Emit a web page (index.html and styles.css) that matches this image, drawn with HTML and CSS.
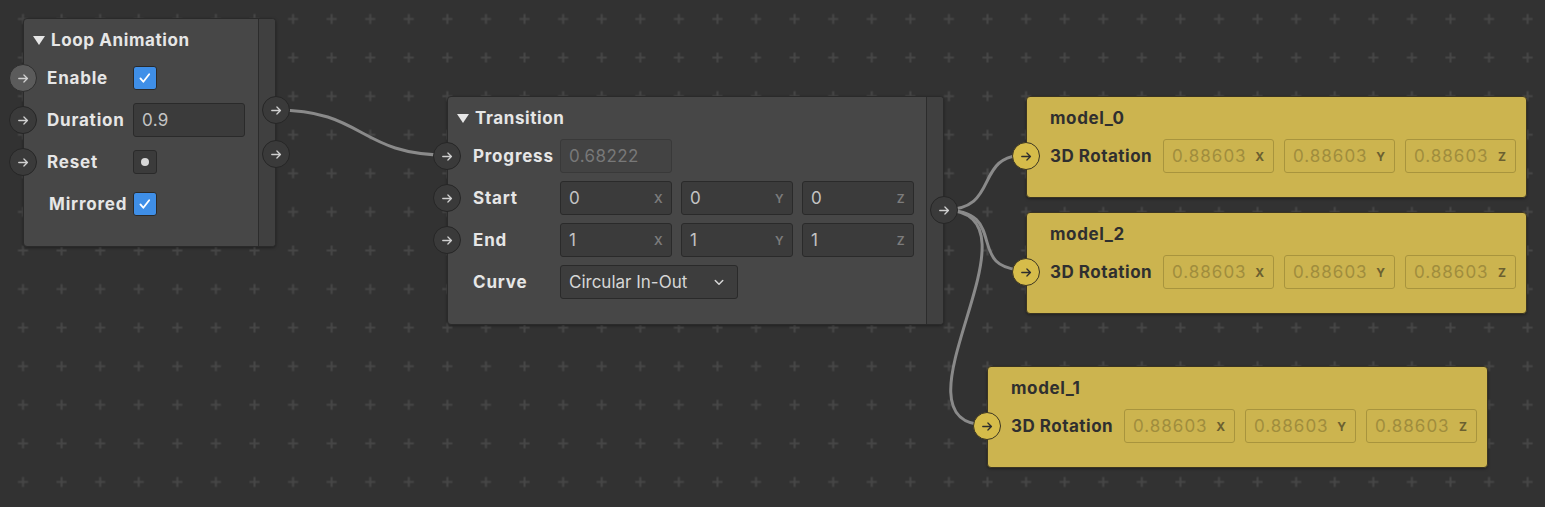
FILE: index.html
```html
<!DOCTYPE html>
<html lang="en">
<head>
    <meta charset="UTF-8">
    <meta name="viewport" content="width=device-width, initial-scale=1.0">
    <title>Node Graph</title>
    <link rel="stylesheet" href="styles.css">
</head>
<body>
    <div class="canvas">
        <svg class="grid" xmlns="http://www.w3.org/2000/svg">
            <defs>
                <pattern id="plus" x="3.71" y="-0.29" width="38.58" height="38.58" patternUnits="userSpaceOnUse">
                    <path d="M14.3 19.3h10M19.3 14.3v10" stroke="#464646" stroke-width="2"/>
                </pattern>
            </defs>
            <rect width="100%" height="100%" fill="url(#plus)"/>
        </svg>

        <svg class="edges" viewBox="0 0 1545 507" xmlns="http://www.w3.org/2000/svg">
            <g fill="none" stroke="#8a8a8a" stroke-width="3" stroke-linecap="round">
                <path d="M276 110 C 365 110, 358 155, 447 155"/>
                <path d="M943 210 C 1002 210, 972 155, 1026 155"/>
                <path d="M943 210 C 1012 210, 962 270, 1026 270"/>
                <path d="M943 210 C 1055 210, 880 425, 987 425"/>
            </g>
        </svg>

        <!-- Loop Animation -->
        <div class="node node-loop">
            <div class="node-body">
                <div class="node-title"><span class="caret"></span>Loop Animation</div>
                <div class="row">
                    <span class="port port-hover"><svg viewBox="0 0 24 24"><path d="M6 12h11M12.5 7.5 17 12l-4.5 4.5"/></svg></span>
                    <span class="label">Enable</span>
                    <span class="check"><svg viewBox="0 0 24 24"><path d="M6.5 12.5l3.5 4 7-9"/></svg></span>
                </div>
                <div class="row">
                    <span class="port"><svg viewBox="0 0 24 24"><path d="M6 12h11M12.5 7.5 17 12l-4.5 4.5"/></svg></span>
                    <span class="label">Duration</span>
                    <span class="field"><span class="value">0.9</span></span>
                </div>
                <div class="row">
                    <span class="port"><svg viewBox="0 0 24 24"><path d="M6 12h11M12.5 7.5 17 12l-4.5 4.5"/></svg></span>
                    <span class="label">Reset</span>
                    <span class="trigger"><span class="dot"></span></span>
                </div>
                <div class="row">
                    <span class="label label-plain">Mirrored</span>
                    <span class="check"><svg viewBox="0 0 24 24"><path d="M6.5 12.5l3.5 4 7-9"/></svg></span>
                </div>
            </div>
            <div class="node-outs">
                <span class="port port-out out-a"><svg viewBox="0 0 24 24"><path d="M6 12h11M12.5 7.5 17 12l-4.5 4.5"/></svg></span>
                <span class="port port-out out-b"><svg viewBox="0 0 24 24"><path d="M6 12h11M12.5 7.5 17 12l-4.5 4.5"/></svg></span>
            </div>
        </div>

        <!-- Transition -->
        <div class="node node-transition">
            <div class="node-body">
                <div class="node-title"><span class="caret"></span>Transition</div>
                <div class="row">
                    <span class="port"><svg viewBox="0 0 24 24"><path d="M6 12h11M12.5 7.5 17 12l-4.5 4.5"/></svg></span>
                    <span class="label">Progress</span>
                    <span class="field field-disabled"><span class="value">0.68222</span></span>
                </div>
                <div class="row">
                    <span class="port"><svg viewBox="0 0 24 24"><path d="M6 12h11M12.5 7.5 17 12l-4.5 4.5"/></svg></span>
                    <span class="label">Start</span>
                    <div class="vec">
                        <span class="field"><span class="value">0</span><span class="axis">X</span></span>
                        <span class="field"><span class="value">0</span><span class="axis">Y</span></span>
                        <span class="field"><span class="value">0</span><span class="axis">Z</span></span>
                    </div>
                </div>
                <div class="row">
                    <span class="port"><svg viewBox="0 0 24 24"><path d="M6 12h11M12.5 7.5 17 12l-4.5 4.5"/></svg></span>
                    <span class="label">End</span>
                    <div class="vec">
                        <span class="field"><span class="value">1</span><span class="axis">X</span></span>
                        <span class="field"><span class="value">1</span><span class="axis">Y</span></span>
                        <span class="field"><span class="value">1</span><span class="axis">Z</span></span>
                    </div>
                </div>
                <div class="row">
                    <span class="label label-plain">Curve</span>
                    <span class="select">Circular In-Out<svg viewBox="0 0 24 24"><path d="M7 10l5 5 5-5"/></svg></span>
                </div>
            </div>
            <div class="node-outs">
                <span class="port port-out out-c"><svg viewBox="0 0 24 24"><path d="M6 12h11M12.5 7.5 17 12l-4.5 4.5"/></svg></span>
            </div>
        </div>

        <!-- Models -->
        <div class="node model model-0">
            <div class="node-title">model_0</div>
            <div class="row">
                <span class="port port-yellow"><svg viewBox="0 0 24 24"><path d="M6 12h11M12.5 7.5 17 12l-4.5 4.5"/></svg></span>
                <span class="label">3D Rotation</span>
                <div class="vec">
                    <span class="field"><span class="value">0.88603</span><span class="axis">X</span></span>
                    <span class="field"><span class="value">0.88603</span><span class="axis">Y</span></span>
                    <span class="field"><span class="value">0.88603</span><span class="axis">Z</span></span>
                </div>
            </div>
        </div>

        <div class="node model model-2">
            <div class="node-title">model_2</div>
            <div class="row">
                <span class="port port-yellow"><svg viewBox="0 0 24 24"><path d="M6 12h11M12.5 7.5 17 12l-4.5 4.5"/></svg></span>
                <span class="label">3D Rotation</span>
                <div class="vec">
                    <span class="field"><span class="value">0.88603</span><span class="axis">X</span></span>
                    <span class="field"><span class="value">0.88603</span><span class="axis">Y</span></span>
                    <span class="field"><span class="value">0.88603</span><span class="axis">Z</span></span>
                </div>
            </div>
        </div>

        <div class="node model model-1">
            <div class="node-title">model_1</div>
            <div class="row">
                <span class="port port-yellow"><svg viewBox="0 0 24 24"><path d="M6 12h11M12.5 7.5 17 12l-4.5 4.5"/></svg></span>
                <span class="label">3D Rotation</span>
                <div class="vec">
                    <span class="field"><span class="value">0.88603</span><span class="axis">X</span></span>
                    <span class="field"><span class="value">0.88603</span><span class="axis">Y</span></span>
                    <span class="field"><span class="value">0.88603</span><span class="axis">Z</span></span>
                </div>
            </div>
        </div>
    </div>
</body>
</html>
```

FILE: styles.css
```css
html, body {
    margin: 0;
    padding: 0;
    width: 100%;
    height: 100%;
    overflow: hidden;
    background-color: #323232;
    font-family: Inter, "Noto Sans", sans-serif;
}
.canvas {
    position: relative;
    width: 1545px;
    height: 507px;
}
.grid, .edges {
    position: absolute;
    top: 0;
    left: 0;
    width: 100%;
    height: 100%;
}

/* nodes */
.node {
    position: absolute;
    display: flex;
    box-sizing: border-box;
    border: 1px solid #2a2a2a;
    border-radius: 4px;
    background-color: #474747;
    box-shadow: 0 1px 3px rgba(0,0,0,0.35);
}
.node-loop {
    left: 23px;
    top: 18px;
    width: 253px;
    height: 229px;
}
.node-transition {
    left: 447px;
    top: 96px;
    width: 497px;
    height: 229px;
}
.node-body {
    flex: 1;
    display: flex;
    flex-direction: column;
    padding-top: 9px;
    border-right: 1px solid #2c2c2c;
}
.node-outs {
    position: relative;
    width: 16px;
    background-color: #404040;
    border-radius: 0 3px 3px 0;
}
.node-title {
    display: flex;
    align-items: center;
    gap: 6px;
    height: 24px;
    margin-bottom: 5px;
    padding-left: 9px;
    font-size: 17px;
    font-weight: 700;
    letter-spacing: 0.6px;
    color: #e6e6e6;
}
.caret {
    width: 0;
    height: 0;
    border-left: 6px solid transparent;
    border-right: 6px solid transparent;
    border-top: 9px solid #e6e6e6;
}
.row {
    position: relative;
    display: flex;
    align-items: center;
    height: 42px;
    padding-left: 23px;
}
.label {
    width: 86px;
    flex-shrink: 0;
    font-size: 17px;
    font-weight: 700;
    letter-spacing: 0.8px;
    color: #e6e6e6;
}
.label-plain {
    padding-left: 2px;
    width: 84px;
}
.node-transition .row {
    padding-left: 25px;
}
.node-transition .label-plain {
    width: 87px;
    padding-left: 0;
}
.node-transition .label {
    width: 87px;
}

/* ports */
.port {
    position: absolute;
    left: -15px;
    top: 7px;
    width: 28px;
    height: 28px;
    box-sizing: border-box;
    border-radius: 50%;
    border: 1px solid #262626;
    background-color: #3a3a3a;
    display: flex;
    align-items: center;
    justify-content: center;
}
.port svg {
    width: 19px;
    height: 19px;
    fill: none;
    stroke: #d0d0d0;
    stroke-width: 1.6;
    stroke-linecap: round;
    stroke-linejoin: round;
}
.port-hover {
    background-color: #5b5b5b;
    border-color: #2e2e2e;
}
.port-out {
    left: auto;
    right: -15px;
}
.out-a { top: 77px; }
.out-b { top: 121px; }
.out-c { top: 99px; }
.port-yellow {
    left: -15px;
    background-color: #d6bc4a;
    border-color: #3b3522;
}
.port-yellow svg {
    stroke: #2e2e2e;
}

/* controls */
.check {
    width: 24px;
    height: 24px;
    box-sizing: border-box;
    border: 1px solid #2a2a2a;
    border-radius: 3px;
    background-color: #3f8fe8;
    display: flex;
    align-items: center;
    justify-content: center;
}
.check svg {
    width: 20px;
    height: 20px;
    fill: none;
    stroke: #ffffff;
    stroke-width: 2.2;
    stroke-linecap: round;
    stroke-linejoin: round;
}
.trigger {
    width: 24px;
    height: 24px;
    box-sizing: border-box;
    border: 1px solid #2a2a2a;
    border-radius: 3px;
    background-color: #3b3b3b;
    display: flex;
    align-items: center;
    justify-content: center;
}
.dot {
    width: 8px;
    height: 8px;
    border-radius: 50%;
    background-color: #d8d8d8;
}
.field {
    display: flex;
    align-items: center;
    justify-content: space-between;
    width: 112px;
    height: 34px;
    box-sizing: border-box;
    padding: 0 8px;
    border: 1px solid #2a2a2a;
    border-radius: 3px;
    background-color: #3b3b3b;
    font-size: 17px;
    color: #c4c4c4;
    letter-spacing: 0.4px;
}
.field-disabled {
    background-color: #434343;
    border-color: #393939;
    color: #787878;
}
.axis {
    font-size: 12px;
    font-weight: 600;
    color: #7c7c7c;
}
.vec {
    display: flex;
    gap: 9px;
}
.select {
    display: flex;
    align-items: center;
    justify-content: space-between;
    width: 178px;
    height: 34px;
    box-sizing: border-box;
    padding: 0 9px 0 8px;
    border: 1px solid #2a2a2a;
    border-radius: 3px;
    background-color: #3d3d3d;
    font-size: 17px;
    color: #d6d6d6;
}
.select svg {
    width: 18px;
    height: 18px;
    fill: none;
    stroke: #d6d6d6;
    stroke-width: 2;
    stroke-linecap: round;
    stroke-linejoin: round;
}

/* model nodes */
.model {
    flex-direction: column;
    width: 501px;
    height: 102px;
    padding-top: 9px;
    background-color: #ccb44f;
    border-color: #3a3422;
}
.model-0 { left: 1026px; top: 96px; }
.model-2 { left: 1026px; top: 212px; }
.model-1 { left: 987px; top: 366px; }
.model .node-title {
    padding-left: 23px;
    color: #2f2f2f;
}
.model .row {
    padding-left: 23px;
}
.model .label {
    width: 113px;
    color: #2f2f2f;
    letter-spacing: 0.5px;
}
.model .vec {
    gap: 10px;
}
.model .field {
    width: 111px;
    background-color: transparent;
    border-color: #a8943d;
    color: #a08d3d;
    letter-spacing: 1px;
}
.model .axis {
    color: #6b6030;
    font-weight: 700;
}
```
